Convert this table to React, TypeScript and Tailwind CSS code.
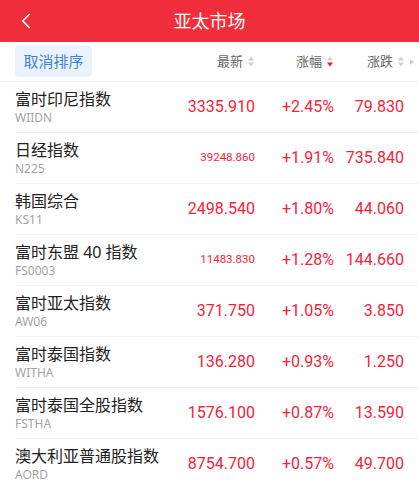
import { ChevronLeft } from "lucide-react";

type Row = { name: string; code: string; price: string; pct: string; chg: string; small?: boolean };

const rows: Row[] = [
  { name: "富时印尼指数", code: "WIIDN", price: "3335.910", pct: "+2.45%", chg: "79.830" },
  { name: "日经指数", code: "N225", price: "39248.860", pct: "+1.91%", chg: "735.840", small: true },
  { name: "韩国综合", code: "KS11", price: "2498.540", pct: "+1.80%", chg: "44.060" },
  { name: "富时东盟 40 指数", code: "FS0003", price: "11483.830", pct: "+1.28%", chg: "144.660", small: true },
  { name: "富时亚太指数", code: "AW06", price: "371.750", pct: "+1.05%", chg: "3.850" },
  { name: "富时泰国指数", code: "WITHA", price: "136.280", pct: "+0.93%", chg: "1.250" },
  { name: "富时泰国全股指数", code: "FSTHA", price: "1576.100", pct: "+0.87%", chg: "13.590" },
  { name: "澳大利亚普通股指数", code: "AORD", price: "8754.700", pct: "+0.57%", chg: "49.700" },
];

const cjk = "font-['Noto_Sans','Noto_Sans_CJK_SC',sans-serif]";
const num = "font-['Roboto','Noto_Sans',sans-serif]";

// up/down sort arrows; `active` paints the down one red
function SortArrows({ active }: { active?: boolean }) {
  return (
    <svg width="6" height="11" viewBox="0 0 6 11" className="ml-[5px]">
      <path d="M3 0.5 L6 4.5 H0 Z" fill="#d0d0d0" />
      <path d="M3 10.5 L6 6.5 H0 Z" fill={active ? "#ee1c2b" : "#d0d0d0"} />
    </svg>
  );
}

export default function App() {
  return (
    <div className={`w-[419px] h-[487px] overflow-hidden bg-white ${cjk}`}>
      <header className="relative h-[42px] bg-[#f02d3a] flex items-center justify-center">
        <ChevronLeft className="absolute left-[13px] top-[8px] text-white" size={26} strokeWidth={1.5} />
        <span className="text-white text-[18px] leading-none">亚太市场</span>
      </header>

      <div className="h-[40px] flex items-center border-b border-[#efefef] pl-[15px]">
        <div className="w-[77px] h-[31px] rounded-[4px] bg-[#eaf3fd] text-[#3b82d8] text-[15px] flex items-center justify-center">
          取消排序
        </div>
        <div className="ml-auto flex items-center text-[13px] text-[#666] pr-[5px]">
          <span className="flex items-center">最新<SortArrows /></span>
          <span className="flex items-center ml-[42px]">涨幅<SortArrows active /></span>
          <span className="flex items-center ml-[34px]">涨跌<SortArrows /></span>
          <svg width="4" height="6" viewBox="0 0 4 6" className="ml-[6px]">
            <path d="M0 0 L4 3 L0 6 Z" fill="#d0d0d0" />
          </svg>
        </div>
      </div>

      {rows.map((r) => (
        <div key={r.code} className="ml-[15px] h-[51px] flex items-center border-b border-[#f2f2f2]">
          <div className="flex-1 flex flex-col">
            <span className="text-[16px] leading-[20px] text-[#222]">{r.name}</span>
            <span className="text-[12px] leading-[14px] mt-[2px] text-[#a3a3a3]">{r.code}</span>
          </div>
          <div className={`${num} w-[95px] text-right text-[#f5233a] ${r.small ? "text-[11.5px]" : "text-[16px]"}`}>
            {r.price}
          </div>
          <div className={`${num} w-[79px] text-right text-[16px] text-[#f5233a]`}>{r.pct}</div>
          <div className={`${num} w-[70px] text-right text-[16px] text-[#f5233a]`}>{r.chg}</div>
          <div className="w-[15px]" />
        </div>
      ))}
    </div>
  );
}
